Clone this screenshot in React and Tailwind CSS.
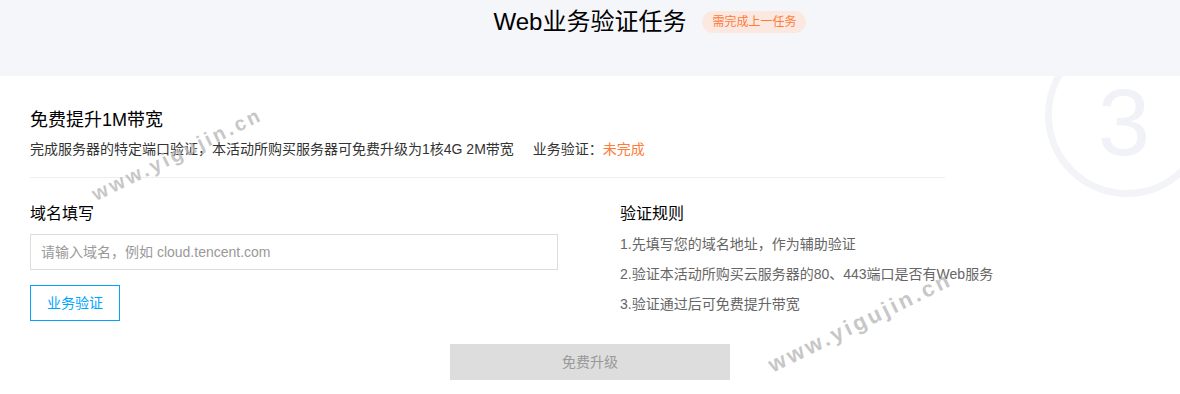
import React from 'react';

const rules = [
  '1.先填写您的域名地址，作为辅助验证',
  '2.验证本活动所购买云服务器的80、443端口是否有Web服务',
  '3.验证通过后可免费提升带宽',
];

const Watermark = ({ x, y, size }) => (
  <div
    className={`pointer-events-none absolute z-20 -translate-x-1/2 -translate-y-1/2 -rotate-[26deg] whitespace-nowrap font-bold tracking-[3px] text-[#b8b8b8]/80 ${size}`}
    style={{ left: x, top: y }}
  >
    www.yigujin.cn
  </div>
);

const App = () => {
  return (
    <div className="relative h-[394px] w-[1180px] overflow-hidden bg-white font-['Liberation_Sans','Noto_Sans_CJK_SC',sans-serif]">
      {/* step number ring, sits under the header */}
      <div className="pointer-events-none absolute left-[1045px] top-[33px] flex h-[164px] w-[164px] items-center justify-center rounded-full border-[7px] border-[#f3f4f8]">
        <span className="translate-x-[-3px] translate-y-[8px] text-[94px] leading-none text-[#f1f2f7]">3</span>
      </div>

      <div className="relative z-10 flex h-[76px] justify-center bg-[#f5f6fa] pt-[8px]">
        <div className="relative h-[28px]">
          <h1 className="text-[24px] leading-[28px] text-[#000]">Web业务验证任务</h1>
          <span className="absolute left-full top-[3px] ml-[16px] flex h-[22px] items-center whitespace-nowrap rounded-full bg-[#fbe9e1] px-[10px] text-[12px] text-[#ff7b39]">
            需完成上一任务
          </span>
        </div>
      </div>

      <div className="relative px-[30px] pt-[32px]">
        <h2 className="text-[18px] leading-[24px] text-[#000]">免费提升1M带宽</h2>
        <p className="mt-[7px] flex text-[14px] leading-[20px] text-[#333]">
          <span>完成服务器的特定端口验证，本活动所购买服务器可免费升级为1核4G 2M带宽</span>
          <span className="ml-[19px]">
            业务验证：<span className="text-[#ff7b39]">未完成</span>
          </span>
        </p>
        <div className="mt-[18px] h-px w-[915px] bg-[#eeeeee]" />

        <div className="flex">
          <div className="w-[528px]">
            <div className="mt-[25px] text-[16px] leading-[22px] text-[#000]">域名填写</div>
            <input
              type="text"
              placeholder="请输入域名，例如 cloud.tencent.com"
              className="mt-[9px] h-[36px] w-[528px] border border-[#dcdcdc] px-[10px] text-[14px] text-[#333] outline-none placeholder:text-[#999]"
            />
            <button className="mt-[15px] flex h-[36px] w-[90px] items-center justify-center border border-[#00a4ff] text-[14px] text-[#00a4ff]">
              业务验证
            </button>
          </div>
          <div className="ml-[62px]">
            <div className="mt-[25px] text-[16px] leading-[22px] text-[#000]">验证规则</div>
            <ul className="mt-[4px]">
              {rules.map((r) => (
                <li key={r} className="text-[14px] leading-[30px] text-[#666]">{r}</li>
              ))}
            </ul>
          </div>
        </div>

        <div className="mt-[23px] flex justify-center">
          <button className="h-[36px] w-[280px] bg-[#dddddd] text-[14px] text-[#999]">免费升级</button>
        </div>
      </div>

      <Watermark x={177} y={154} size="text-[20px]" />
      <Watermark x={860} y={322} size="text-[22px]" />
    </div>
  );
};

export default App;
